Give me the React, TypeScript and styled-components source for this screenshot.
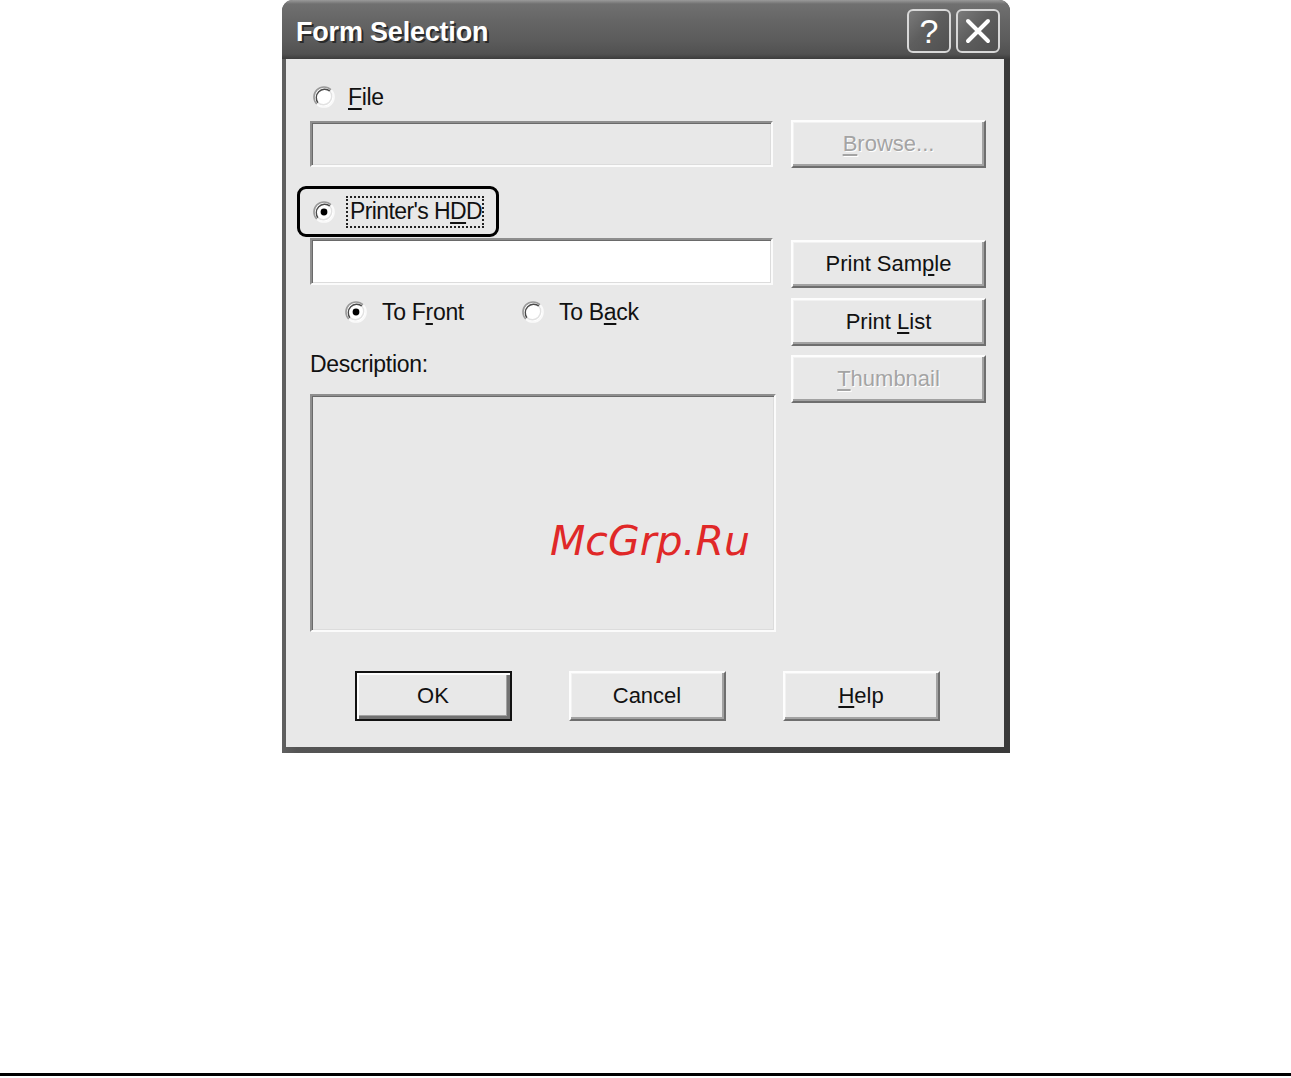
import React from "react";
import styled, { createGlobalStyle } from "styled-components";

const GlobalStyle = createGlobalStyle`
  html, body {
    margin: 0;
    padding: 0;
    background: #fff;
  }
  body {
    font-family: "Liberation Sans", Arial, sans-serif;
    color: #111;
  }
  * {
    box-sizing: border-box;
  }
`;

const Page = styled.div`
  min-height: 1078px;
  display: flex;
  flex-direction: column;
`;

const Window = styled.div`
  margin-left: 282px;
  width: 728px;
  border-radius: 11px 11px 0 0;
  overflow: hidden;
  background: linear-gradient(to right, #606060 0, #555 2%, #3a3a3a 100%);
`;

const TitleBar = styled.div`
  height: 59px;
  display: flex;
  align-items: center;
  padding: 0 10px 0 14px;
  background: linear-gradient(
    to bottom,
    #9a9a9a 0,
    #707070 4px,
    #666 20px,
    #5c5c5c 40px,
    #515151 54px,
    #3c3c3c 59px
  );
`;

const Title = styled.div`
  flex: 1;
  padding-top: 6px;
  font: bold 27px "Liberation Sans", Arial, sans-serif;
  color: #fff;
  text-shadow: 2px 2px 0 #2a2a2a;
  letter-spacing: -0.2px;
`;

const CaptionButtons = styled.div`
  display: flex;
  gap: 5px;
  padding-top: 2px;
`;

const CaptionButton = styled.div`
  width: 44px;
  height: 44px;
  border: 2px solid #d8d8d8;
  border-radius: 6px;
  background: linear-gradient(135deg, #7a7a7a 0, #5e5e5e 45%, #505050 100%);
  display: flex;
  align-items: center;
  justify-content: center;
  color: #fff;
  font: 34px "Liberation Sans", Arial, sans-serif;
  line-height: 1;
`;

const Frame = styled.div`
  padding: 0 6px 6px 4px;
`;

const Body = styled.div`
  background: #e8e8e8;
  padding: 0 18px 26px 24px;
  display: flex;
  flex-direction: column;
`;

const Main = styled.div`
  display: flex;
  gap: 15px;
`;

const LeftColumn = styled.div`
  width: 466px;
  display: flex;
  flex-direction: column;
`;

const RightColumn = styled.div`
  width: 195px;
  display: flex;
  flex-direction: column;
`;

const Option = styled.label<{ $top?: number; $width?: number }>`
  display: flex;
  align-items: center;
  gap: 13px;
  height: 28px;
  margin-top: ${(p) => p.$top ?? 0}px;
  width: ${(p) => (p.$width ? `${p.$width}px` : "auto")};
  font-size: 23px;
  letter-spacing: -0.3px;
`;

const FirstOption = styled(Option)`
  margin-left: 3px;
`;

const Key = styled.u`
  text-decoration-thickness: 2px;
  text-underline-offset: 3px;
`;

const Highlight = styled.div`
  margin-top: 19px;
  margin-left: -13px;
  width: 202px;
  height: 51px;
  border: 3px solid #000;
  border-radius: 9px;
  display: flex;
  align-items: center;
  padding-left: 13px;
  gap: 11px;
  font-size: 23px;
  letter-spacing: -0.6px;
`;

const Focus = styled.span`
  border: 2px dotted #222;
  padding: 1px 0 1px 2px;
  height: 32px;
  display: flex;
  align-items: center;
`;

const Field = styled.div<{ $white?: boolean; $top: number; $w: number; $h: number }>`
  position: relative;
  margin-top: ${(p) => p.$top}px;
  width: ${(p) => p.$w}px;
  height: ${(p) => p.$h}px;
  background: ${(p) => (p.$white ? "#fff" : "#e8e8e8")};
  border-style: solid;
  border-width: 2px;
  border-color: #8e8e8e #fbfbfb #fbfbfb #8e8e8e;
  box-shadow: inset 1px 1px 0 #6a6a6a, inset -1px -1px 0 #dcdcdc;
`;

const RadioRow = styled.div`
  display: flex;
  align-items: center;
  height: 28px;
  margin-top: 13px;
  padding-left: 35px;
`;

const PairOption = styled(Option)`
  gap: 15px;
`;

const Label = styled.div`
  margin-top: 26px;
  height: 24px;
  line-height: 24px;
  font-size: 23px;
  letter-spacing: -0.3px;
`;

const Watermark = styled.div`
  position: absolute;
  left: 238px;
  top: 125px;
  font: italic 41px "DejaVu Sans", sans-serif;
  line-height: 41px;
  color: #e02828;
  white-space: nowrap;
`;

const Button = styled.button<{ $top?: number }>`
  margin-top: ${(p) => p.$top ?? 0}px;
  height: 48px;
  width: 100%;
  padding: 0;
  font: 22px "Liberation Sans", Arial, sans-serif;
  color: #111;
  background: #e8e8e8;
  border: 2px solid;
  border-color: #fdfdfd #6e6e6e #6e6e6e #fdfdfd;
  box-shadow: inset -2px -2px 0 #a2a2a2, inset 1px 1px 0 #f2f2f2;
  cursor: default;

  &:disabled {
    color: #a4a4a4;
    text-shadow: 1px 1px 0 #fff;
  }
`;

const DialogButton = styled(Button)<{ $default?: boolean }>`
  width: 157px;
  height: 50px;
  ${(p) =>
    p.$default &&
    `
    border-color: #111;
    box-shadow: inset 2px 2px 0 #fdfdfd, inset -3px -3px 0 #727272, inset -4px -4px 0 #a2a2a2;
  `}
`;

const Footer = styled.div`
  margin-top: 39px;
  display: flex;
  justify-content: center;
  gap: 57px;
  padding-right: 2px;
`;

const Rule = styled.div`
  margin-top: auto;
  margin-bottom: 2px;
  height: 3px;
  background: #000;
`;

const Radio = ({ checked }: { checked?: boolean }) => (
  <svg width="22" height="22" viewBox="0 0 22 22">
    <circle cx="11" cy="11" r="9.5" fill="#fff" />
    <path d="M3.9 18.1 A10 10 0 0 1 18.1 3.9" stroke="#9a9a9a" strokeWidth="1.6" fill="none" />
    <path d="M5.1 16.9 A8.4 8.4 0 0 1 16.9 5.1" stroke="#4a4a4a" strokeWidth="1.4" fill="none" />
    <path d="M18.1 3.9 A10 10 0 0 1 3.9 18.1" stroke="#fafafa" strokeWidth="1.6" fill="none" />
    <path d="M16.9 5.1 A8.4 8.4 0 0 1 5.1 16.9" stroke="#e2e2e2" strokeWidth="1.4" fill="none" />
    {checked && <circle cx="11" cy="11" r="3.4" fill="#000" />}
  </svg>
);

const CloseGlyph = () => (
  <svg width="30" height="30" viewBox="0 0 30 30">
    <path d="M5 5 L25 25 M25 5 L5 25" stroke="#fff" strokeWidth="4" strokeLinecap="round" />
  </svg>
);

export default function App() {
  return (
    <Page>
      <GlobalStyle />
      <Window>
        <TitleBar>
          <Title>Form Selection</Title>
          <CaptionButtons>
            <CaptionButton>?</CaptionButton>
            <CaptionButton>
              <CloseGlyph />
            </CaptionButton>
          </CaptionButtons>
        </TitleBar>
        <Frame>
          <Body>
            <Main>
              <LeftColumn>
                <FirstOption $top={24}>
                  <Radio />
                  <span>
                    <Key>F</Key>ile
                  </span>
                </FirstOption>
                <Field $top={10} $w={463} $h={46} />
                <Highlight>
                  <Radio checked />
                  <Focus>
                    Printer's H<Key>D</Key>D
                  </Focus>
                </Highlight>
                <Field $white $top={1} $w={463} $h={47} />
                <RadioRow>
                  <PairOption $width={177}>
                    <Radio checked />
                    <span>
                      To F<Key>r</Key>ont
                    </span>
                  </PairOption>
                  <PairOption>
                    <Radio />
                    <span>
                      To B<Key>a</Key>ck
                    </span>
                  </PairOption>
                </RadioRow>
                <Label>Description:</Label>
                <Field $top={18} $w={466} $h={238}>
                  <Watermark>McGrp.Ru</Watermark>
                </Field>
              </LeftColumn>
              <RightColumn>
                <Button $top={61} disabled>
                  <Key>B</Key>rowse...
                </Button>
                <Button $top={72}>
                  Print Sam<Key>p</Key>le
                </Button>
                <Button $top={10}>
                  Print <Key>L</Key>ist
                </Button>
                <Button $top={9} disabled>
                  <Key>T</Key>humbnail
                </Button>
              </RightColumn>
            </Main>
            <Footer>
              <DialogButton $default>OK</DialogButton>
              <DialogButton>Cancel</DialogButton>
              <DialogButton>
                <Key>H</Key>elp
              </DialogButton>
            </Footer>
          </Body>
        </Frame>
      </Window>
      <Rule />
    </Page>
  );
}
